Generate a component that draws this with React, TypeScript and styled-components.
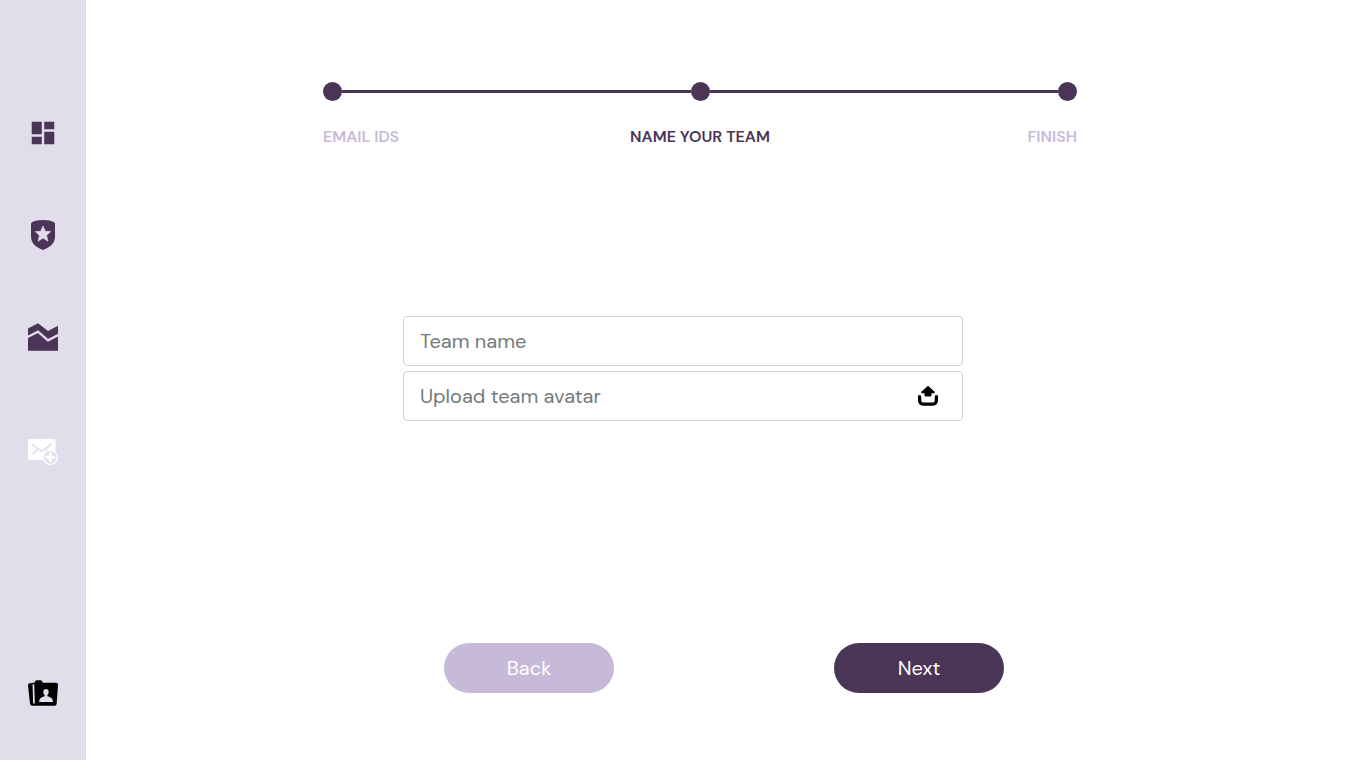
import React from "react";
import styled, { createGlobalStyle } from "styled-components";
import { MdDashboard } from "react-icons/md";

const plum = "#4a3556";
const lilac = "#c7bad9";
const mist = "#e1ddea";

const GlobalStyle = createGlobalStyle`
  * { box-sizing: border-box; }
  body {
    margin: 0;
    background: #fff;
    color: ${plum};
    font-family: "DM Sans", Inter, "Liberation Sans", sans-serif;
  }
`;

const Page = styled.div`
  display: flex;
  min-height: 100vh;
`;

const Sidebar = styled.nav`
  display: flex;
  flex-direction: column;
  align-items: center;
  flex: none;
  width: 86px;
  padding: 118px 0 52px;
  background: ${mist};
  border-right: 1px solid #dcd8e5;
`;

const SideLinks = styled.div`
  display: flex;
  flex-direction: column;
  align-items: center;
  flex: 1;
  gap: 72px;
`;

const SideLink = styled.a<{ $color?: string; $active?: boolean }>`
  display: block;
  padding: ${(p) => (p.$active ? "13px 0" : "0")};
  color: ${(p) => p.$color ?? plum};

  svg {
    display: block;
    width: 30px;
    height: 30px;
  }
`;

const Main = styled.main`
  display: flex;
  flex-direction: column;
  align-items: center;
  flex: 1;
  padding: 82px 86px 67px 0;
`;

const Stepper = styled.section`
  width: 100%;
  max-width: 788px;
  padding-left: 34px;
`;

const Track = styled.div`
  display: flex;
  align-items: center;
`;

const Dot = styled.span`
  flex: none;
  width: 19px;
  height: 19px;
  border-radius: 50%;
  background: ${plum};
`;

const Line = styled.span`
  flex: 1;
  height: 3px;
  background: ${plum};
`;

const Steps = styled.ol`
  display: grid;
  grid-template-columns: 1fr auto 1fr;
  margin: 26px 0 0;
  padding: 0;
  list-style: none;
`;

const Step = styled.li<{ $current?: boolean; $align?: string }>`
  color: ${(p) => (p.$current ? plum : lilac)};
  font-size: 16px;
  font-weight: 600;
  line-height: 20px;
  text-align: ${(p) => p.$align ?? "left"};
`;

const TeamForm = styled.form`
  display: flex;
  flex-direction: column;
  align-items: center;
  flex: 1;
  width: 100%;
  padding-top: 169px;
`;

const Fields = styled.div`
  display: flex;
  flex-direction: column;
  gap: 5px;
  width: 100%;
  max-width: 560px;
`;

const Field = styled.div`
  display: flex;
  align-items: center;
  height: 50px;
  padding: 0 24px 0 16px;
  border: 1px solid #d0d1d3;
  border-radius: 4px;
  background: #fff;
`;

const TextInput = styled.input`
  flex: 1;
  min-width: 0;
  padding: 0;
  border: 0;
  outline: 0;
  background: transparent;
  color: ${plum};
  font-family: inherit;
  font-size: 20px;
  line-height: 30px;

  &::placeholder {
    color: #737a7a;
    opacity: 1;
  }
`;

const IconButton = styled.button`
  flex: none;
  padding: 0;
  border: 0;
  background: transparent;
  color: #000;
  cursor: pointer;

  svg {
    display: block;
  }
`;

const Actions = styled.div`
  display: flex;
  justify-content: center;
  gap: 220px;
  margin-top: auto;
  padding-left: 82px;
`;

const PillButton = styled.button<{ $muted?: boolean }>`
  width: 170px;
  height: 50px;
  padding: 0;
  border: 0;
  border-radius: 25px;
  background: ${(p) => (p.$muted ? lilac : plum)};
  color: #fff;
  font-family: inherit;
  font-size: 20px;
  font-weight: 400;
  line-height: 30px;
  cursor: pointer;
`;

const BadgeIcon = () => (
  <svg viewBox="0 0 30 30" aria-hidden="true">
    <path
      fill="currentColor"
      d="M15 0C10.5 0 6.5 .9 4 2.2Q3 2.7 3 4V16.500C3 23.500 8.500 27.500 15 30C21.500 27.500 27 23.500 27 16.500V4Q27 2.700 26 2.200C23.500 .9 19.500 0 15 0Z"
    />
    <path
      fill={mist}
      stroke={mist}
      strokeWidth=".6"
      d="M15 6L17.300 11.200L22.700 11.600L18.600 15.400L20 21.300L15 18.100L10 21.300L11.400 15.400L7.300 11.600L12.700 11.200Z"
    />
  </svg>
);

const AreaIcon = () => (
  <svg viewBox="0 0 30 30" aria-hidden="true">
    <path fill="currentColor" d="M0 6.500L10 1.300L20 9L30 3.800V28.700H0Z" />
    <path d="M-1 15.200L10 9.700L20 18.300L31 12.600" fill="none" stroke={mist} strokeWidth="2.300" />
  </svg>
);

const MailPlusIcon = () => (
  <svg viewBox="0 0 30 30" aria-hidden="true">
    <rect y="2" width="27.500" height="21" rx="2" fill="currentColor" />
    <path
      d="M4.300 7.300L13.700 14.500L23.300 7.300M4.300 17L10 12.300M17.500 12.300L20 14.300"
      fill="none"
      stroke={mist}
      strokeWidth="1.700"
    />
    <circle cx="22.300" cy="20.300" r="7" fill={mist} stroke="currentColor" strokeWidth="1.300" />
    <path d="M22.300 15.500V25.100M17.500 20.300H27.100" stroke="currentColor" strokeWidth="3" />
  </svg>
);

const FolderPersonIcon = () => (
  <svg viewBox="0 0 30 30" aria-hidden="true">
    <path
      fill="currentColor"
      d="M7 4Q7 2.300 8.700 2.300H12.800Q13.600 2.300 14.100 3.300L14.900 4.700H28.200Q30 4.700 30 6.700L28.700 25.500Q28.500 27.700 26.500 27.700H4.300Q2.300 27.700 2 25.500L0 7.500Q-.2 5.500 2 5.200L7 4.500Z"
    />
    <path d="M5.400 6.200L6 25.500" stroke={mist} strokeWidth="1.700" fill="none" />
    <path
      fill={mist}
      d="M18 11C19.600 11 20.700 12.200 20.700 14C20.700 15.300 20.100 16.400 19.400 17V18.300C22.500 19.200 25 20 25 24H11.200C11.200 20 13.600 19.200 16.600 18.300V17C15.900 16.400 15.300 15.300 15.300 14C15.300 12.200 16.400 11 18 11Z"
    />
  </svg>
);

const UploadIcon = () => (
  <svg width="20" height="20" viewBox="0 0 20 20" aria-hidden="true">
    <path
      fill="currentColor"
      d="M10 -.3L16.600 5.800Q17.100 7.300 15.600 7.300H13.600V9Q13.600 10.400 12.300 10.400H7.700Q6.400 10.400 6.400 9V7.300H4.400Q2.900 7.300 3.400 5.800Z"
    />
    <path
      d="M1.600 10.700V14Q1.600 18.200 5.800 18.200H14.200Q18.400 18.200 18.400 14V10.700"
      fill="none"
      stroke="currentColor"
      strokeWidth="3.300"
      strokeLinecap="round"
    />
  </svg>
);

export default function App() {
  return (
    <Page>
      <GlobalStyle />
      <Sidebar aria-label="Main">
        <SideLinks>
          <SideLink href="#dashboard" aria-label="Dashboard">
            <MdDashboard />
          </SideLink>
          <SideLink href="#badges" aria-label="Badges">
            <BadgeIcon />
          </SideLink>
          <SideLink href="#statistics" aria-label="Statistics">
            <AreaIcon />
          </SideLink>
          <SideLink href="#invite" aria-label="Invite" aria-current="page" $color="#fff" $active>
            <MailPlusIcon />
          </SideLink>
        </SideLinks>
        <SideLink href="#profile" aria-label="Profile" $color="#000">
          <FolderPersonIcon />
        </SideLink>
      </Sidebar>
      <Main>
        <Stepper aria-label="Progress">
          <Track>
            <Dot />
            <Line />
            <Dot />
            <Line />
            <Dot />
          </Track>
          <Steps>
            <Step>EMAIL IDS</Step>
            <Step $current $align="center" aria-current="step">
              NAME YOUR TEAM
            </Step>
            <Step $align="right">FINISH</Step>
          </Steps>
        </Stepper>
        <TeamForm onSubmit={(e) => e.preventDefault()}>
          <Fields>
            <Field>
              <TextInput type="text" aria-label="Team name" placeholder="Team name" />
            </Field>
            <Field>
              <TextInput type="text" aria-label="Upload team avatar" placeholder="Upload team avatar" />
              <IconButton type="button" aria-label="Choose avatar file">
                <UploadIcon />
              </IconButton>
            </Field>
          </Fields>
          <Actions>
            <PillButton type="button" $muted>
              Back
            </PillButton>
            <PillButton type="submit">Next</PillButton>
          </Actions>
        </TeamForm>
      </Main>
    </Page>
  );
}
